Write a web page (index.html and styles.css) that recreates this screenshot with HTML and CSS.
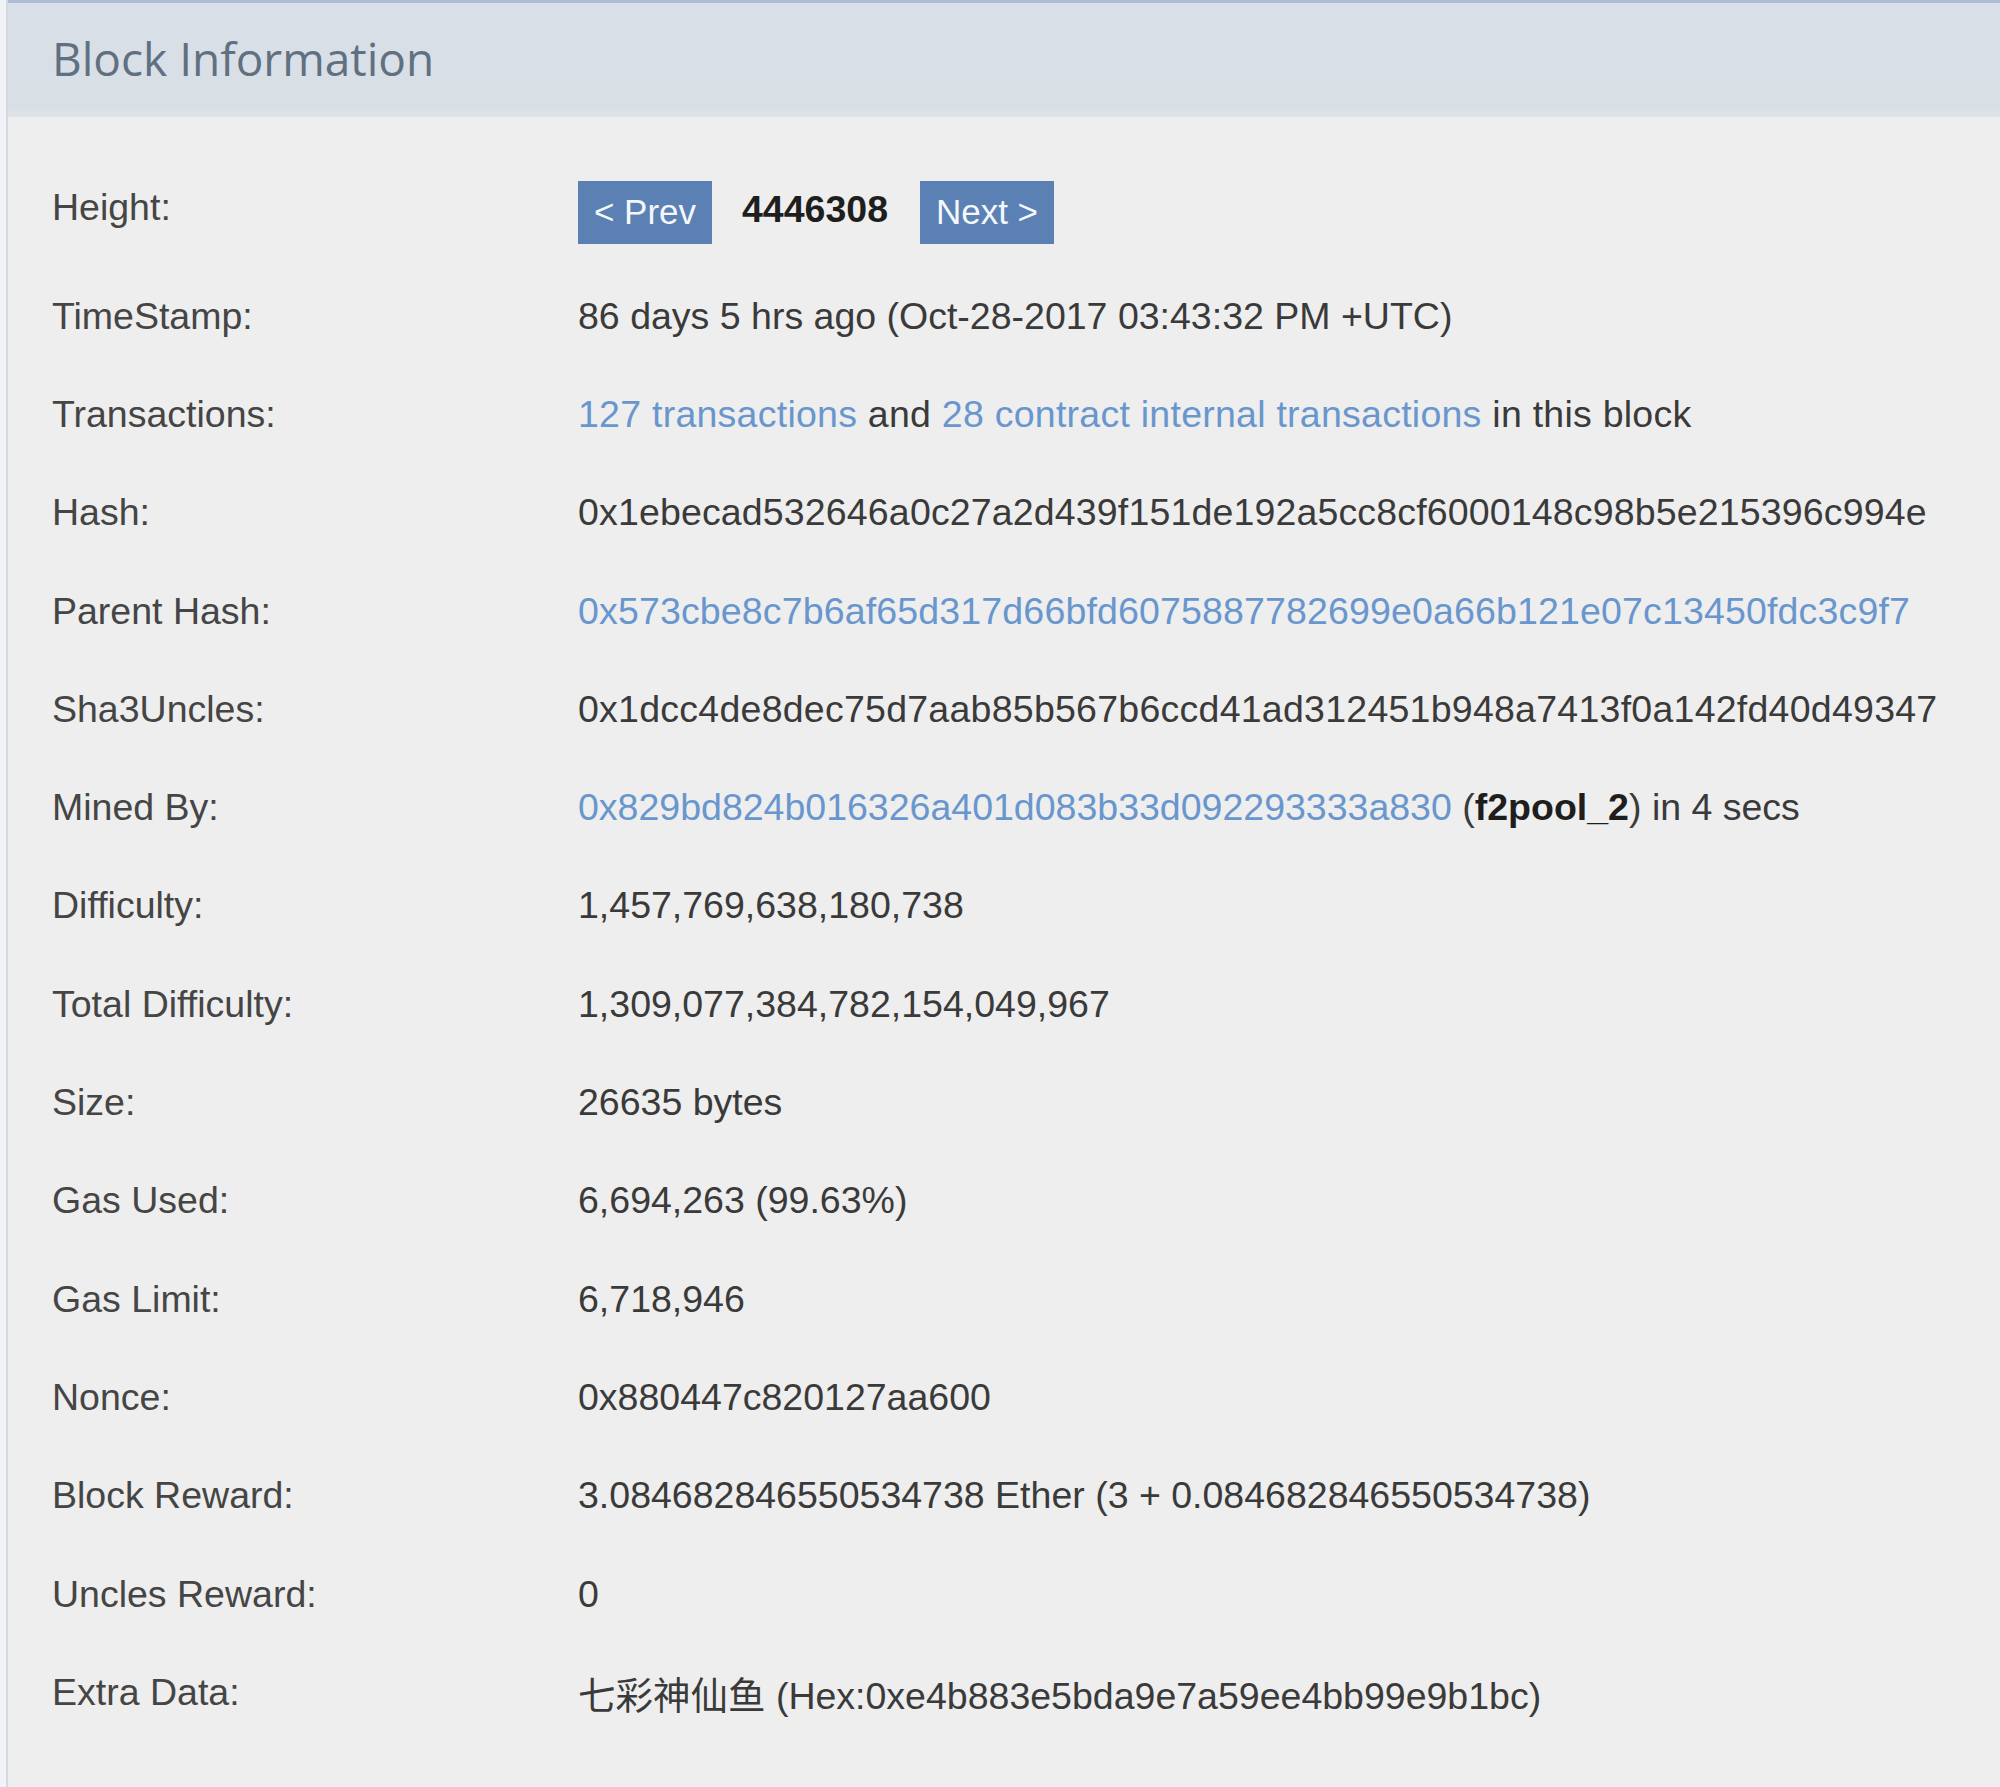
FILE: index.html
```html
<!DOCTYPE html>
<html>
<head>
<meta charset="utf-8">
<link rel="stylesheet" href="styles.css">
</head>
<body>
<div class="panel">
  <div class="panel-head">
    <h1 class="panel-title">Block Information</h1>
  </div>
  <div class="panel-body">
    <div class="row row-height">
      <div class="label label-height">Height:</div>
      <div class="value nav">
        <a class="btn">&lt; Prev</a>
        <span class="num">4446308</span>
        <a class="btn">Next &gt;</a>
      </div>
    </div>
    <div class="row">
      <div class="label">TimeStamp:</div>
      <div class="value">86 days 5 hrs ago (Oct-28-2017 03:43:32 PM +UTC)</div>
    </div>
    <div class="row">
      <div class="label">Transactions:</div>
      <div class="value spaced"><a class="link">127 transactions</a> and <a class="link">28 contract internal transactions</a> in this block</div>
    </div>
    <div class="row">
      <div class="label">Hash:</div>
      <div class="value hex">0x1ebecad532646a0c27a2d439f151de192a5cc8cf6000148c98b5e215396c994e</div>
    </div>
    <div class="row">
      <div class="label">Parent Hash:</div>
      <div class="value hex"><a class="link">0x573cbe8c7b6af65d317d66bfd6075887782699e0a66b121e07c13450fdc3c9f7</a></div>
    </div>
    <div class="row">
      <div class="label">Sha3Uncles:</div>
      <div class="value hex wide">0x1dcc4de8dec75d7aab85b567b6ccd41ad312451b948a7413f0a142fd40d49347</div>
    </div>
    <div class="row">
      <div class="label">Mined By:</div>
      <div class="value"><a class="link">0x829bd824b016326a401d083b33d092293333a830</a> (<b class="strong">f2pool_2</b>) in 4 secs</div>
    </div>
    <div class="row">
      <div class="label">Difficulty:</div>
      <div class="value">1,457,769,638,180,738</div>
    </div>
    <div class="row">
      <div class="label">Total Difficulty:</div>
      <div class="value">1,309,077,384,782,154,049,967</div>
    </div>
    <div class="row">
      <div class="label">Size:</div>
      <div class="value">26635 bytes</div>
    </div>
    <div class="row">
      <div class="label">Gas Used:</div>
      <div class="value">6,694,263 (99.63%)</div>
    </div>
    <div class="row">
      <div class="label">Gas Limit:</div>
      <div class="value">6,718,946</div>
    </div>
    <div class="row">
      <div class="label">Nonce:</div>
      <div class="value">0x880447c820127aa600</div>
    </div>
    <div class="row">
      <div class="label">Block Reward:</div>
      <div class="value">3.084682846550534738 Ether (3 + 0.084682846550534738)</div>
    </div>
    <div class="row">
      <div class="label">Uncles Reward:</div>
      <div class="value">0</div>
    </div>
    <div class="row">
      <div class="label">Extra Data:</div>
      <div class="value">七彩神仙鱼 (Hex:0xe4b883e5bda9e7a59ee4bb99e9b1bc)</div>
    </div>
  </div>
</div>
</body>
</html>
```
FILE: styles.css
```css
html, body {
  margin: 0;
  padding: 0;
}
body {
  background: #f1f3f6;
  width: 2000px;
  height: 1787px;
  overflow: hidden;
}
.panel {
  margin-left: 6px;
  border-left: 2px solid #d2dbe5;
  background: #eeeeee;
  height: 1787px;
  box-sizing: border-box;
}
.panel-head {
  height: 117px;
  box-sizing: border-box;
  border-top: 3px solid #aebdd6;
  background: linear-gradient(#d9dfe7, #d8dfe5 90%, #dfe4e8);
  display: flex;
  align-items: center;
  padding-left: 44px;
}
.panel-title {
  margin: 0;
  font-family: "Open Sans", sans-serif;
  font-weight: 400;
  font-size: 46px;
  color: #617081;
  padding-bottom: 4px;
}
.panel-body {
  padding: 40px 0 0 44px;
  font-family: "Liberation Sans", Arial, "Noto Sans CJK SC", sans-serif;
  font-size: 37.5px;
  color: #3a3a3a;
}
.row {
  display: grid;
  grid-template-columns: 526px 1fr;
  align-items: center;
  height: 98.3px;
}
.row-height {
  height: 110px;
}
.label-height {
  margin-bottom: 10px;
}
.label {
  color: #454545;
}
.value {
  white-space: nowrap;
}
.hex {
  letter-spacing: 0.15px;
}
.wide {
  letter-spacing: 0.25px;
}
.spaced {
  letter-spacing: 0.25px;
}
.nav {
  display: flex;
  align-items: center;
}
.btn {
  display: inline-flex;
  align-items: center;
  justify-content: center;
  width: 134px;
  height: 63px;
  background: #5b81b4;
  color: #f4f7fb;
  font-size: 35px;
  box-sizing: border-box;
}
.num {
  margin: 0 32px 6px 30px;
  color: #1e1e1e;
  font-weight: 700;
}
.link {
  color: #6996cd;
}
.strong {
  color: #1e1e1e;
}
```
